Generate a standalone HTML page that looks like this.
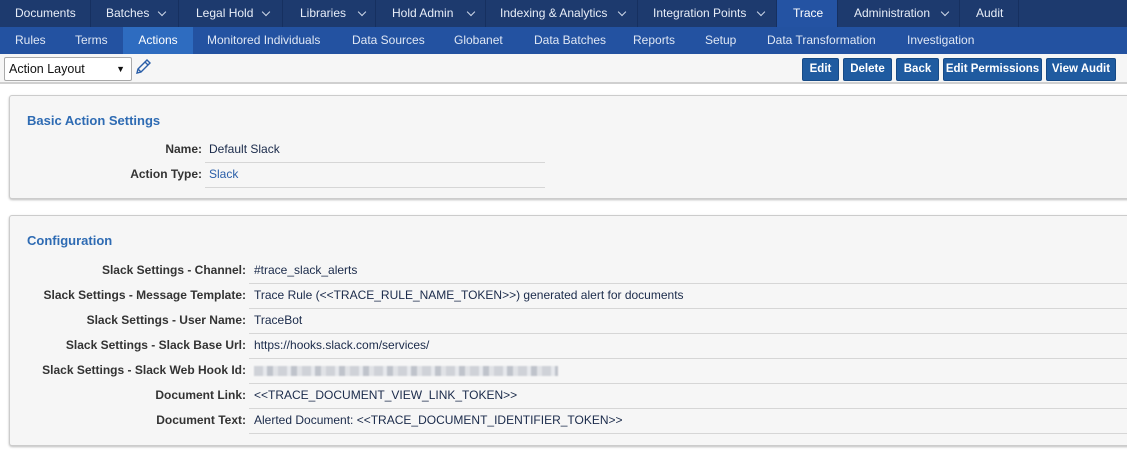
<!DOCTYPE html>
<html><head><style>
*{box-sizing:border-box;margin:0;padding:0}
body{width:1127px;height:459px;overflow:hidden;background:#fff;font-family:"Liberation Sans",Arial,sans-serif;font-size:12px;color:#222;position:relative}
.top{position:absolute;left:0;top:0;width:1127px;height:27px;background:#1d3a6e}
.top div{position:absolute;top:0;height:27px;line-height:27px;color:#e8eef8;font-size:12px;white-space:nowrap;border-right:1px solid #163060}
.top div.act{background:#2453a3;color:#fff}
.top span.t{position:absolute;top:0}
.car{position:absolute;top:9px;width:6px;height:6px;border-right:1.3px solid #cfd8e8;border-bottom:1.3px solid #cfd8e8;transform:rotate(45deg)}
.sub{position:absolute;left:0;top:27px;width:1127px;height:27px;background:#2352a1}
.sub span{position:absolute;top:0;height:27px;line-height:27px;color:#dfe7f4;font-size:12px;white-space:nowrap}
.sub .act{background:#2e6cc0;color:#fff;text-align:center}
.tb{position:absolute;left:0;top:54px;width:1127px;height:30px;background:#f6f6f6;border-bottom:2px solid #d0d0d0}
.sel{position:absolute;left:4px;top:3px;width:128px;height:24px;background:#fff;border:1px solid #aaa;border-radius:2px;font-size:12.5px;line-height:22px;padding-left:4px;color:#111}
.sel b{position:absolute;right:6px;top:0;font-size:9px}
.btn{position:absolute;top:4px;height:23px;line-height:21px;background:#1f5ba0;border:1px solid #164a86;border-radius:2px;color:#fff;font-weight:bold;font-size:11.5px;text-align:center}
.panel{position:absolute;left:9px;width:1130px;background:#f6f6f6;border:1px solid #ccc;border-radius:3px;box-shadow:0 1px 2px #bbb}
.panel h3{position:absolute;left:17px;font-size:13px;color:#2e6bb3;font-weight:bold}
.row{position:absolute;height:25px;line-height:25px;font-size:12px}
.row .l{position:absolute;right:0;font-weight:bold;color:#333;white-space:nowrap;text-align:right}
.row .v{position:absolute;color:#1a2a4a;white-space:nowrap;border-bottom:1px solid #d6d6d6}
</style></head><body>
<div class="top">
<div style="left:0;width:91px"><span class="t" style="left:15px">Documents</span></div>
<div style="left:91px;width:88px"><span class="t" style="left:15px">Batches</span><span class="car" style="left:68px"></span></div>
<div style="left:179px;width:104px"><span class="t" style="left:17px">Legal Hold</span><span class="car" style="left:84px"></span></div>
<div style="left:283px;width:93px"><span class="t" style="left:17px">Libraries</span><span class="car" style="left:76px"></span></div>
<div style="left:376px;width:110px"><span class="t" style="left:16px">Hold Admin</span><span class="car" style="left:92px"></span></div>
<div style="left:486px;width:152px"><span class="t" style="left:14px">Indexing &amp; Analytics</span><span class="car" style="left:133px"></span></div>
<div style="left:638px;width:139px"><span class="t" style="left:15px">Integration Points</span><span class="car" style="left:120px"></span></div>
<div class="act" style="left:777px;width:61px"><span class="t" style="left:16px">Trace</span></div>
<div style="left:838px;width:122px"><span class="t" style="left:16px">Administration</span><span class="car" style="left:104px"></span></div>
<div style="left:960px;width:59px"><span class="t" style="left:16px">Audit</span></div>
</div>
<div class="sub">
<span style="left:15px">Rules</span><span style="left:75px">Terms</span>
<span class="act" style="left:123px;width:70px">Actions</span>
<span style="left:207px">Monitored Individuals</span><span style="left:352px">Data Sources</span>
<span style="left:454px">Globanet</span><span style="left:534px">Data Batches</span>
<span style="left:633px">Reports</span><span style="left:705px">Setup</span>
<span style="left:767px">Data Transformation</span><span style="left:907px">Investigation</span>
</div>
<div class="tb">
<div class="sel">Action Layout<b>▼</b></div>
<svg style="position:absolute;left:134px;top:4px" width="18" height="18" viewBox="0 0 18 18"><path d="M3 15 L4 11 L13 2 L16 5 L7 14 Z M4 11 L7 14 M11 4 L14 7" fill="none" stroke="#2a5ea8" stroke-width="1.4"/></svg>
<div class="btn" style="left:802px;width:37px">Edit</div>
<div class="btn" style="left:843px;width:49px">Delete</div>
<div class="btn" style="left:896px;width:43px">Back</div>
<div class="btn" style="left:943px;width:99px">Edit Permissions</div>
<div class="btn" style="left:1046px;width:70px">View Audit</div>
</div>
<div class="panel" style="top:95px;height:104px">
<h3 style="top:17px">Basic Action Settings</h3>
</div>
<div class="row" style="left:0;top:137px;width:202px"><span class="l">Name:</span></div>
<div class="row" style="left:205px;top:137px"><span class="v" style="left:0;width:340px;padding-left:4px">Default Slack</span></div>
<div class="row" style="left:0;top:162px;width:202px"><span class="l">Action Type:</span></div>
<div class="row" style="left:205px;top:162px"><span class="v" style="left:0;width:340px;padding-left:4px;color:#2a5ea8">Slack</span></div>

<div class="panel" style="top:215px;height:231px">
<h3 style="top:17px">Configuration</h3>
</div>
<div class="row" style="left:0;top:258px;width:246px"><span class="l">Slack Settings - Channel:</span></div>
<div class="row" style="left:0;top:283px;width:246px"><span class="l">Slack Settings - Message Template:</span></div>
<div class="row" style="left:0;top:308px;width:246px"><span class="l">Slack Settings - User Name:</span></div>
<div class="row" style="left:0;top:333px;width:246px"><span class="l">Slack Settings - Slack Base Url:</span></div>
<div class="row" style="left:0;top:358px;width:246px"><span class="l">Slack Settings - Slack Web Hook Id:</span></div>
<div class="row" style="left:0;top:383px;width:246px"><span class="l">Document Link:</span></div>
<div class="row" style="left:0;top:408px;width:246px"><span class="l">Document Text:</span></div>
<div class="row" style="left:249px;top:258px"><span class="v" style="width:900px;padding-left:5px">#trace_slack_alerts</span></div>
<div class="row" style="left:249px;top:283px"><span class="v" style="width:900px;padding-left:5px">Trace Rule (&lt;&lt;TRACE_RULE_NAME_TOKEN&gt;&gt;) generated alert for documents</span></div>
<div class="row" style="left:249px;top:308px"><span class="v" style="width:900px;padding-left:5px">TraceBot</span></div>
<div class="row" style="left:249px;top:333px"><span class="v" style="width:900px;padding-left:5px">https://hooks.slack.com/services/</span></div>
<div class="row" style="left:249px;top:358px"><span class="v" style="width:900px;padding-left:5px"><span style="display:inline-block;width:304px;height:10px;vertical-align:middle;filter:blur(0.8px);background:repeating-linear-gradient(90deg,#cfd2d8 0 9px,#e6e8ec 9px 13px,#bfc3cb 13px 19px,#e0e2e6 19px 24px)"></span></span></div>
<div class="row" style="left:249px;top:383px"><span class="v" style="width:900px;padding-left:5px">&lt;&lt;TRACE_DOCUMENT_VIEW_LINK_TOKEN&gt;&gt;</span></div>
<div class="row" style="left:249px;top:408px"><span class="v" style="width:900px;padding-left:5px">Alerted Document: &lt;&lt;TRACE_DOCUMENT_IDENTIFIER_TOKEN&gt;&gt;</span></div>
</body></html>
